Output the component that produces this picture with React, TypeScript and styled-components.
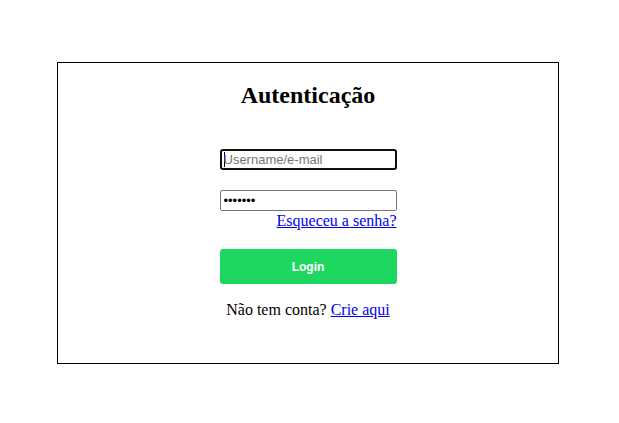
import React from "react";
import styled, { createGlobalStyle } from "styled-components";

const GlobalStyle = createGlobalStyle`
  body {
    margin: 0;
    background: #fff;
    color: #000;
    font-family: "Liberation Serif", "Times New Roman", serif;
    font-size: 16px;
  }
`;

const Page = styled.main`
  display: flex;
  justify-content: center;
  padding: 62px 60px 59px 57px;
`;

const Card = styled.section`
  box-sizing: border-box;
  flex: 1;
  max-width: 502px;
  display: flex;
  flex-direction: column;
  align-items: center;
  padding: 19px 16px 44px;
  border: 1px solid #000;
`;

const Title = styled.h1`
  margin: 0 0 40px;
  font-size: 24px;
  line-height: 27px;
`;

const Form = styled.form`
  display: flex;
  flex-direction: column;
  width: 177px;
`;

const Field = styled.input`
  box-sizing: border-box;
  width: 100%;
  height: 21px;
  margin: 0;
  padding: 1px 3px;
  border: 1px solid #767676;
  border-radius: 2px;
  background: #fff;
  color: #000;
  font: 13px "Liberation Sans", Arial, sans-serif;

  & + & {
    margin-top: 20px;
  }

  &::placeholder {
    color: #757575;
  }

  &:focus {
    border: 2px solid #101010;
    border-radius: 3px;
    padding: 0 2px;
    outline: none;
  }

  /* A steady caret while the focused field is still empty. */
  &:focus:placeholder-shown {
    caret-color: transparent;
    background: linear-gradient(#000, #000) 2px 1px / 1px 15px no-repeat #fff;
  }
`;

const TextLink = styled.a`
  color: #0000ee;
  text-decoration: underline;
`;

const Recover = styled.div`
  line-height: 19px;
  text-align: right;
`;

const Submit = styled.button`
  height: 35px;
  margin: 19px 0 16px;
  border: 0;
  border-radius: 3px;
  background: #1ed760;
  color: #fff;
  font: bold 12px "Liberation Sans", Arial, sans-serif;
  cursor: pointer;
`;

const Signup = styled.p`
  margin: 0;
  line-height: 19px;
  text-align: center;
`;

export default function App() {
  return (
    <>
      <GlobalStyle />
      <Page>
        <Card>
          <Title>Autenticação</Title>
          <Form onSubmit={(event) => event.preventDefault()}>
            <Field type="text" aria-label="Username/e-mail" placeholder="Username/e-mail" autoFocus />
            <Field type="password" aria-label="Senha" defaultValue="1234567" />
            <Recover>
              <TextLink href="#recuperar">Esqueceu a senha?</TextLink>
            </Recover>
            <Submit type="submit">Login</Submit>
            <Signup>
              Não tem conta? <TextLink href="#criar">Crie aqui</TextLink>
            </Signup>
          </Form>
        </Card>
      </Page>
    </>
  );
}
